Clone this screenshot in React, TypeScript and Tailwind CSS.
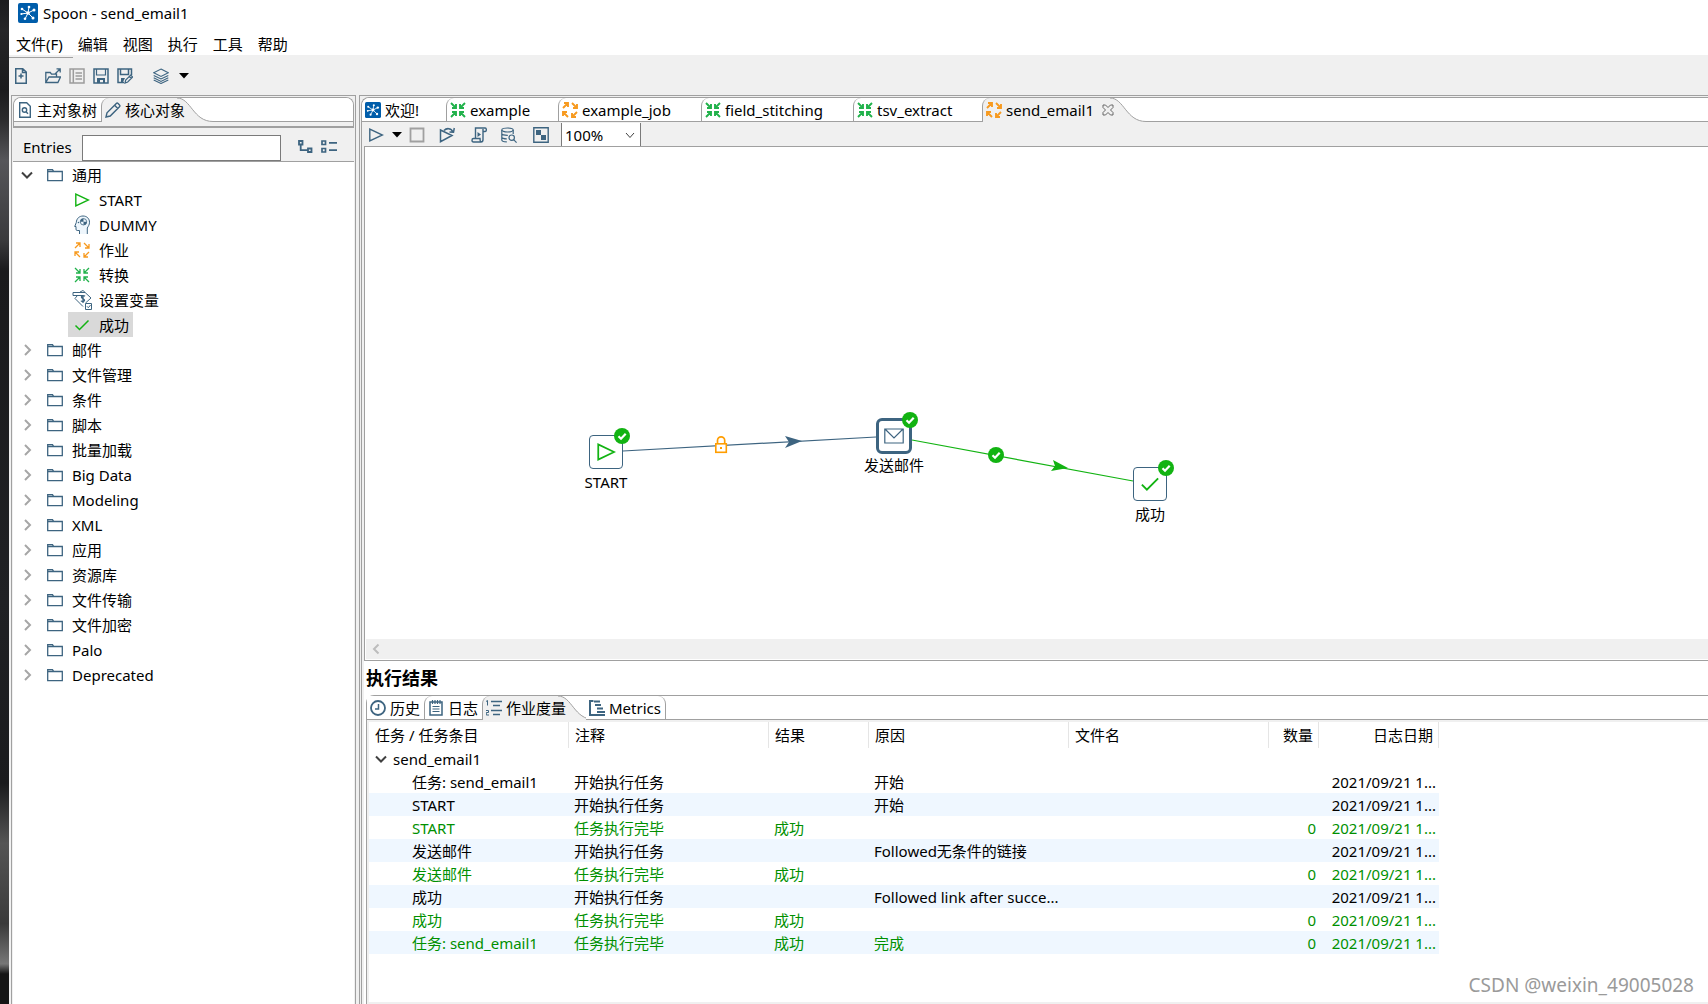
import React, { useState } from "react";

type IconProps = { className?: string };

const BLUE = "#3d6480";
const GREEN = "#12b312";

function Svg({ className = "size-4", children, box = "0 0 16 16", color = BLUE, width = 1.5 }: {
  className?: string; children: React.ReactNode; box?: string; color?: string; width?: number;
}) {
  return (
    <svg className={`shrink-0 ${className}`} viewBox={box} fill="none" stroke={color} strokeWidth={width} aria-hidden="true">
      {children}
    </svg>
  );
}

function SpoonLogo({ className = "size-4" }: IconProps) {
  return (
    <Svg className={className} box="0 0 20 20" color="#fff" width={1}>
      <rect width="20" height="20" rx="2" fill="#005daa" stroke="none" />
      <path d="M10 10L4 6M10 10L3 11M10 10L7 16M10 10L15 15M10 10L16 7M10 10L11 4" />
      <g fill="#fff" stroke="none">
        <circle cx="4" cy="6" r="1.3" /><circle cx="3.4" cy="11" r="1.1" /><circle cx="7" cy="15.8" r="1.3" />
        <circle cx="15" cy="15" r="1.5" /><circle cx="16" cy="7" r="1.5" /><circle cx="11" cy="4" r="1.3" /><circle cx="10" cy="10" r="1.8" />
      </g>
    </Svg>
  );
}
const NewIcon = () => (
  <Svg className="h-4 w-3" box="0 0 12 16"><path d="M.75.75h7L11.25 4v11.25H.75zM7.5.75V4.5h3.7M6 5.5v5M3.5 8h5" /></Svg>
);
const OpenIcon = () => (
  <Svg width={1.3}><path d="M.8 14.5V4.5h4.5l1.2 1.6h5V9M.8 14.5L4 9h11.5l-2.6 5.5zM10 6l5-5M11.5.8h3.7v3.7" /></Svg>
);
const ListIcon = () => (
  <Svg color="#9c9c9c"><path d="M1 1h14v14H1zM4.3 1v14M6.5 5H13M6.5 8H13M6.5 11H13" /></Svg>
);
const SaveIcon = () => (
  <Svg><path d="M1 1h14v14H1z" /><path d="M3.5 1v6h9V1" strokeWidth="1.2" /><path d="M4 10h8v5h-2v-3H7v3H4z" fill={BLUE} stroke="none" /></Svg>
);
const SaveAsIcon = () => (
  <Svg><path d="M7 14.5H1V1h13.5v6M3.5 1v5.5h8V1" /><path d="M4 10h4l-2 4H4z" fill={BLUE} stroke="none" /><path d="M8 15l.7-3 5-5 2 2-5 5zM12.3 8.5l2 2" strokeWidth="1.2" /></Svg>
);
const LayersIcon = () => (
  <Svg width={1.1}><path d="M8 1l7.3 3.7L8 8.4.7 4.7zM.7 7.4L8 11l7.3-3.6M.7 9.8L8 13.4l7.3-3.6M.7 12L8 15.5l7.3-3.5" /></Svg>
);
const Caret = () => (
  <svg className="h-1.5 w-2.5 shrink-0" viewBox="0 0 10 6" aria-hidden="true"><path d="M0 0h10L5 5.5z" fill="#000" /></svg>
);
const PageSearchIcon = () => (
  <Svg className="h-4 w-3" box="0 0 12 16" width={1.4}><path d="M.7.7h7l3.6 3.6v11H.7z" /><circle cx="5.5" cy="8" r="2.2" /><path d="M7 9.7l2 2" /></Svg>
);
const PencilIcon = () => (
  <Svg width={1.4}><path d="M1 15l1-4.2L11.3 1.5c.6-.6 1.2-.6 1.8 0l1.4 1.4c.6.6.6 1.2 0 1.8L5.2 14zM9.6 3.3l3.2 3.2" /></Svg>
);
const TreeIcon = () => (
  <Svg width={1.8}><path d="M2 2h3.500v3.500H2zM11 9.500h3.500V13H11zM3.700 6v5.200H11" /></Svg>
);
const BulletsIcon = () => (
  <Svg width={1.7}><path d="M1 2h3.500v3.500H1zM1 9.500h3.500V13H1zM8 3.800h8M8 11.200h8" /></Svg>
);
const FolderIcon = () => (
  <Svg className="h-3.5 w-4" box="0 0 16 14" width={1.3}><path d="M.7 12.6V1.6h4.8l1.3 1.9h8.5v9.1zM.7 3.5h6" /></Svg>
);
const Triangle = ({ className, color = GREEN }: IconProps & { color?: string }) => (
  <Svg className={className} color={color} width={1.4}><path d="M1.800 2v12L14.500 8z" /></Svg>
);
const HeadIcon = () => (
  <Svg className="h-5 w-4" box="0 0 16 20" width={1}>
    <path d="M5.500 19v-3.500H3.200c-.8 0-1.200-.5-1.200-1.300V11.500H.7L2.300 7.500C2.500 3.500 5.300 1 9 1c4 0 6.500 2.800 6.500 6.200 0 2.600-1.200 4-2.200 5.800v6" fill="#eef6fc" />
    <circle cx="9.500" cy="6.800" r="3.200" strokeWidth=".8" />
    <path d="M9.500 6.800V3.600a3.200 3.200 0 0 0-3.200 3.200zM9.500 6.800V10a3.200 3.200 0 0 0 3.200-3.200z" fill={BLUE} stroke="none" />
    <circle cx="4.500" cy="7.500" r=".8" fill={BLUE} stroke="none" />
  </Svg>
);
const JobIcon = ({ bold = false }: { bold?: boolean }) => (
  <Svg color="#f79a1f" width={bold ? 1.9 : 1.3}><path d="M1 6l5-5M2 1h4v4M10 1l5 5M15 2v4h-4M15 10l-5 5M10 11v4h4M6 15l-5-5M1 14v-4h4" /></Svg>
);
const TransIcon = ({ bold = false }: { bold?: boolean }) => (
  <Svg color="#21b24b" width={bold ? 1.9 : 1.3}><path d="M1 1l5 5M6 2v4H2M15 1l-5 5M10 2v4h4M1 15l5-5M6 14v-4H2M15 15l-5-5M10 14v-4h4" /></Svg>
);
const VarIcon = () => (
  <Svg className="-mr-0.5 -ml-0.5 size-5" box="0 0 20 20" width={1}><path d="M1 2.500h12M1 5.500h10M1 2.500v3M8 2l3-1.500L19 8l-5.500 5M3 8.500l8 8M5 6L3 8.500" /><path d="M13 6.200c-1-1-4-.6-3.500 1S13 9 12.500 10.500 9.500 11.700 9 10.800M11 5v8" strokeWidth="1.300" /><path d="M13.500 13.500h6v6h-6zM15 16.300l1.300 1.400L18.600 15" fill="#fff" /></Svg>
);
const CheckIcon = ({ className }: IconProps) => (
  <Svg className={className} color={GREEN}><path d="M1.500 8.500L5.500 12.500 14.500 3.500" /></Svg>
);
const StopIcon = () => (
  <Svg color="#a0a0a0" width={1.8}><path d="M1.500 1.500h13v13h-13z" /></Svg>
);
const ReplayIcon = () => (
  <Svg><path d="M1.500 3v11.700L13 8.500zM5 3.500C7.500.8 12 .8 14 5M15.300 1L14.500 5.300 10.500 5" /></Svg>
);
const ScriptIcon = () => (
  <Svg width={1.4}><path d="M4.500 11V1h9.700c1.500 0 1.500 3.500 0 3.500H12M12 2v10.500c0 2-1 2.500-2 2.500H2.500c-2 0-2-3.500 0-3.500H9c0 2 0 3.500 1.500 3.500" /><path d="M6.500 5v5l3.500-2.500z" fill={BLUE} stroke="none" /></Svg>
);
const DbSearchIcon = () => (
  <Svg width={1.2}><ellipse cx="6.500" cy="3" rx="5.700" ry="2" /><path d="M.8 3v10c0 1 2 1.800 5 1.900M12.200 3v4M.8 6.500c0 1.200 3 2 6 1.900M.8 10c0 1.200 2.500 2 5 1.900" /><circle cx="10.700" cy="10.700" r="2.700" /><path d="M12.600 12.600l3 3" /></Svg>
);
const GridIcon = () => (
  <Svg width={1.4}><path d="M.8.8h14.400v14.400H.800z" /><path d="M3 3h5v5H3zM8 8h5v5H8z" fill={BLUE} stroke="none" /></Svg>
);
const ClockIcon = () => (
  <Svg width={1.8}><circle cx="8" cy="8" r="7" /><path d="M8.500 4v5H5" strokeWidth="1.500" /></Svg>
);
const LogIcon = () => (
  <Svg className="mx-px h-4 w-3.5" box="0 0 14 16" width={1.500}><path d="M1 2h12v13H1z" /><path d="M3.500 6.500h7M3.500 9h7M3.500 11.500h7" strokeWidth="1.200" /><path d="M3.500 0v4M6 0v4M8.500 0v4M11 0v4" strokeWidth="1.200" /></Svg>
);
const NumberedIcon = () => (
  <Svg width={1.4}><path d="M5 1.500h11M7 5.500h7M5 10.500h11M7 14.500h7" /><path d="M0 1.500L1.500.5v5M0 10.500h2.500v2H.300v2.500H3" strokeWidth="1" /></Svg>
);
const GanttIcon = () => (
  <Svg width={2}><path d="M4.500 1H1v14h15" /><path d="M5 1.500h6M6 5h6M8 8.500h6M8 12h8" /></Svg>
);

function TabCurve() {
  return (
    <svg className="h-full w-9 shrink-0" viewBox="0 0 36 24" preserveAspectRatio="none" aria-hidden="true">
      <path d="M0 0C14 0 16 23.500 36 23.500V24H0z" fill="#f0f0f0" />
      <path d="M0 0C14 0 16 23.500 36 23.500" fill="none" stroke="#a0a0a0" />
    </svg>
  );
}

function Tab({ icon, label, selected, width, onClick, edge = true, end = false, gap = "gap-1", trailing }: {
  icon: React.ReactNode; label: string; selected?: boolean; width: string; onClick?: () => void; edge?: boolean; end?: boolean; gap?: string; trailing?: React.ReactNode;
}) {
  const look = selected ? "bg-[#f0f0f0] rounded-tl-lg border-l" : `bg-white border-b ${edge ? "border-l rounded-tl-lg" : ""} ${end ? "border-r rounded-tr-lg" : ""}`;
  return (
    <button role="tab" aria-selected={!!selected} onClick={onClick} className={`${width} ${look} h-full shrink-0 border-[#a0a0a0]`}>
      <span className={`relative z-10 flex items-center pl-[3px] whitespace-nowrap ${gap}`}>
        {icon}
        <span>{label}</span>
        {trailing}
      </span>
    </button>
  );
}

const Filler = () => <div className="h-full flex-1 border-b border-[#a0a0a0] bg-white" />;

const generalEntries = [
  { label: "START", icon: <Triangle /> },
  { label: "DUMMY", icon: <HeadIcon /> },
  { label: "作业", icon: <JobIcon /> },
  { label: "转换", icon: <TransIcon /> },
  { label: "设置变量", icon: <VarIcon /> },
  { label: "成功", icon: <CheckIcon /> },
];
const folders = ["邮件", "文件管理", "条件", "脚本", "批量加载", "Big Data", "Modeling", "XML", "应用", "资源库", "文件传输", "文件加密", "Palo", "Deprecated"];

function Chevron({ open }: { open?: boolean }) {
  return (
    <Svg className="size-3" box="0 0 12 12" color={open ? "#404040" : "#a6a6a6"} width={2}>
      <path d={open ? "M1 3.500l5 5 5-5" : "M4 1l5 5-5 5"} />
    </Svg>
  );
}

function LeftPanel() {
  const [picked, setPicked] = useState("成功");
  return (
    <aside className="flex w-[345px] shrink-0 flex-col border border-b-0 border-[#a0a0a0] bg-[#f0f0f0] px-px pt-px">
      <div role="tablist" className="flex h-[25px] shrink-0 overflow-hidden rounded-t-lg border border-b-0 border-[#a0a0a0] bg-white">
        <Tab icon={<span className="pl-0.5"><PageSearchIcon /></span>} label="主对象树" width="w-[87px]" gap="gap-1.5" edge={false} />
        <Tab icon={<PencilIcon />} label="核心对象" width="w-[76px]" selected />
        <TabCurve />
        <Filler />
      </div>
      <div className="h-1.5 shrink-0 border-x border-b-2 border-[#a0a0a0]" />
      <div className="flex h-[34px] shrink-0 items-center border-b border-[#a0a0a0] pt-1 pl-2.5">
        <label htmlFor="entries" className="w-[59px]">Entries</label>
        <input id="entries" className="mt-0.5 h-[26px] w-[199px] border border-[#7a7a7a] bg-white px-1 outline-none" />
        <button aria-label="展开" className="ml-4"><TreeIcon /></button>
        <button aria-label="折叠" className="ml-2"><BulletsIcon /></button>
      </div>
      <ul className="flex-1 overflow-hidden bg-white">
        <li>
          <button className="flex h-[25px] items-center pl-2">
            <Chevron open />
            <span className="mr-[9px] ml-3.5"><FolderIcon /></span>通用
          </button>
          <ul className="pl-[55px]">
            {generalEntries.map((e) => (
              <li key={e.label}>
                <button onClick={() => setPicked(e.label)} className={`flex h-[25px] items-center gap-[9px] px-1.5 pr-1 ${picked === e.label ? "bg-[#d9d9d9]" : ""}`}>
                  {e.icon}
                  {e.label}
                </button>
              </li>
            ))}
          </ul>
        </li>
        {folders.map((f) => (
          <li key={f}>
            <button className="flex h-[25px] items-center pl-2">
              <Chevron />
              <span className="mr-[9px] ml-3.5"><FolderIcon /></span>{f}
            </button>
          </li>
        ))}
      </ul>
    </aside>
  );
}

function Badge({ className = "" }: IconProps) {
  return (
    <svg className={`absolute size-4 ${className}`} viewBox="0 0 16 16" aria-hidden="true">
      <circle cx="8" cy="8" r="8" fill={GREEN} />
      <path d="M4.500 8.200l2.500 2.500 4.700-5" fill="none" stroke="#fff" strokeWidth="2.200" />
    </svg>
  );
}

function Node({ place, label, children, bold }: { place: string; label: string; children: React.ReactNode; bold?: boolean }) {
  return (
    <div className={`absolute flex w-20 flex-col items-center ${place}`}>
      <div className={`relative flex items-center justify-center border-[#3d6480] bg-white ${bold ? "size-9 rounded-md border-3" : "size-[34px] rounded border"}`}>
        {children}
        <Badge className={bold ? "-top-[9px] -right-[9px]" : "-top-2 -right-2"} />
      </div>
      <span className={bold ? "" : "mt-0.5"}>{label}</span>
    </div>
  );
}

function Canvas() {
  return (
    <div className="relative flex-1 overflow-hidden bg-white">
      <svg className="absolute inset-0 h-full w-full" aria-hidden="true">
        <path d="M258 304L511 290" stroke={BLUE} strokeWidth="1.200" />
        <path d="M420 289l17 5-17 7 4-6z" fill={BLUE} />
        <path d="M547 293L768 334" stroke={GREEN} strokeWidth="1.200" />
        <path d="M688 313l15 8-17 3 4-5z" fill={GREEN} />
        <rect x="350.800" y="296.800" width="10.500" height="8.500" fill="#fff" stroke="#ff9d00" strokeWidth="1.600" />
        <path d="M352.500 296.500v-3a3.600 3.600 0 0 1 7.200 0v3" fill="none" stroke="#ff9d00" strokeWidth="1.700" />
        <rect x="355" y="300" width="2" height="2" fill="#ff9d00" />
      </svg>
      <Badge className="top-[300px] left-[623px]" />
      <Node place="top-[288px] left-[201px]" label="START"><Triangle className="size-5" /></Node>
      <Node place="top-[271px] left-[489px]" label="发送邮件" bold>
        <Svg className="h-4 w-5" box="0 0 20 16" width={1.200}><path d="M.8 1h18.400v14H.800zM1.500 1.500L10 10l8.500-8.500" /></Svg>
      </Node>
      <Node place="top-[320px] left-[745px]" label="成功"><CheckIcon className="size-5" /></Node>
    </div>
  );
}

const rows = [
  ["任务: send_email1", "开始执行任务", "", "开始", ""],
  ["START", "开始执行任务", "", "开始", ""],
  ["START", "任务执行完毕", "成功", "", "0"],
  ["发送邮件", "开始执行任务", "", "Followed无条件的链接", ""],
  ["发送邮件", "任务执行完毕", "成功", "", "0"],
  ["成功", "开始执行任务", "", "Followed link after succe...", ""],
  ["成功", "任务执行完毕", "成功", "", "0"],
  ["任务: send_email1", "任务执行完毕", "成功", "完成", "0"],
];
const headers = [
  { label: "任务 / 任务条目", look: "w-[200px] text-left" },
  { label: "注释", look: "w-[200px] text-left" },
  { label: "结果", look: "w-[100px] text-left" },
  { label: "原因", look: "w-[200px] text-left" },
  { label: "文件名", look: "w-[200px] text-left" },
  { label: "数量", look: "w-[50px] text-right" },
  { label: "日志日期", look: "w-[120px] text-right" },
];

function Results() {
  return (
    <section className="flex h-[343px] shrink-0 flex-col bg-white pl-0.5">
      <h2 className="flex h-[34px] shrink-0 items-center text-lg font-bold">执行结果</h2>
      <div role="tablist" className="flex h-[25px] shrink-0 rounded-tl-lg border-t border-l border-[#a0a0a0]">
        <Tab icon={<ClockIcon />} label="历史" width="w-[57px]" edge={false} />
        <Tab icon={<LogIcon />} label="日志" width="w-[58px]" />
        <Tab icon={<NumberedIcon />} label="作业度量" width="w-[76px]" selected />
        <TabCurve />
        <div className="-ml-2 h-full">
          <Tab icon={<GanttIcon />} label="Metrics" width="w-[80px]" edge={false} end />
        </div>
        <Filler />
      </div>
      <div className="flex-1 overflow-hidden border-l border-[#a0a0a0]">
        <div className="h-full overflow-hidden border-t-2 border-b-2 border-l-2 border-[#f0f0f0]">
          <table className="w-[1070px] table-fixed border-separate border-spacing-0 whitespace-nowrap">
            <thead>
              <tr className="h-[26px]">
                {headers.map((h) => (
                  <th key={h.label} scope="col" className={`${h.look} border-r border-[#e5e5e5] p-0 pr-[5px] pl-1.5 font-normal`}>{h.label}</th>
                ))}
              </tr>
            </thead>
            <tbody>
              <tr className="h-[22px]">
                <td colSpan={7} className="p-0">
                  <span className="flex items-center gap-1.5 pl-1.5"><Chevron open />send_email1</span>
                </td>
              </tr>
              {rows.map((r, i) => (
                <tr key={i} className={`h-[23px] odd:bg-[#eff7ff] even:bg-white ${r[4] ? "text-[#009000]" : "text-black"}`}>
                  <td className="p-0 pl-[43px]">{r[0]}</td>
                  <td className="p-0 pl-[5px]">{r[1]}</td>
                  <td className="p-0 pl-[5px]">{r[2]}</td>
                  <td className="p-0 pl-[5px]">{r[3]}</td>
                  <td className="p-0" />
                  <td className="p-0 pr-[3px] text-right">{r[4]}</td>
                  <td className="p-0 pr-[3px] text-right">2021/09/21 1...</td>
                </tr>
              ))}
            </tbody>
          </table>
        </div>
      </div>
    </section>
  );
}

function CloseIcon() {
  return (
    <Svg className="ml-1 size-3" box="0 0 12 12" color="#666" width={1}>
      <path d="M1 1h2.500L6 3.500 8.500 1H11v2.500L8.500 6 11 8.500V11H8.500L6 8.500 3.500 11H1V8.500L3.500 6 1 3.500z" />
    </Svg>
  );
}

function Workspace() {
  return (
    <main className="flex min-w-0 flex-1 flex-col border-t border-l border-[#a0a0a0] bg-[#f0f0f0] pt-px pl-px">
      <div className="flex min-h-0 flex-1 flex-col rounded-tl-lg border-t border-l border-[#a0a0a0]">
        <div role="tablist" className="flex h-6 shrink-0 overflow-hidden rounded-tl-lg bg-white">
          <Tab icon={<SpoonLogo />} label="欢迎!" width="w-[84px]" edge={false} />
          <Tab icon={<TransIcon bold />} label="example" width="w-[112px]" />
          <Tab icon={<JobIcon bold />} label="example_job" width="w-[143px]" />
          <Tab icon={<TransIcon bold />} label="field_stitching" width="w-[152px]" />
          <Tab icon={<TransIcon bold />} label="tsv_extract" width="w-[129px]" />
          <Tab icon={<JobIcon bold />} label="send_email1" width="w-[128px]" selected trailing={<CloseIcon />} />
          <TabCurve />
          <Filler />
        </div>
        <div className="flex min-h-0 flex-1 flex-col pl-0.5">
          <div className="flex h-6 shrink-0 items-center pt-px pl-1">
            <button aria-label="运行"><Triangle color={BLUE} /></button>
            <button aria-label="运行选项" className="ml-2"><Caret /></button>
            <button aria-label="停止" className="ml-[7px]"><StopIcon /></button>
            <button aria-label="重放" className="ml-3.5"><ReplayIcon /></button>
            <button aria-label="脚本" className="ml-4"><ScriptIcon /></button>
            <button aria-label="数据库" className="ml-3.5"><DbSearchIcon /></button>
            <button aria-label="网格" className="ml-4"><GridIcon /></button>
            <div className="relative ml-3 h-[23px] w-20 border-x border-[#7a7a7a] bg-white">
              <select aria-label="缩放" className="h-full w-full appearance-none bg-transparent pl-[3px] outline-none">
                <option>100%</option>
              </select>
              <Svg className="pointer-events-none absolute top-1.5 right-1 size-3" box="0 0 12 12" color="#404040" width={1}><path d="M2 4l4 4.500L10 4" /></Svg>
            </div>
          </div>
          <div className="flex min-h-0 flex-1 flex-col border-y border-l border-[#a0a0a0] bg-white">
            <Canvas />
            <div className="mb-px ml-px flex h-5 shrink-0 items-center bg-[#f0f0f0] pl-1">
              <button aria-label="向左滚动"><Svg className="size-3" box="0 0 12 12" color="#bdbdbd" width={2}><path d="M8.500 1.500L4 6l4.500 4.500" /></Svg></button>
            </div>
          </div>
          <Results />
        </div>
      </div>
    </main>
  );
}

export default function App() {
  return (
    <div className="relative flex h-screen overflow-hidden bg-[#f0f0f0] font-['Noto_Sans','Noto_Sans_CJK_SC',sans-serif] text-[15px] leading-[22px] text-black">
      <div className="w-[9px] shrink-0 bg-[linear-gradient(180deg,#1c1c1e_0%,#262628_3%,#1b1b1d_9%,#2c2c2e_12%,#56565a_16%,#3a3a3c_24%,#1a1a1c_27%,#202124_60%,#1a1b1d_78%,#555_84%,#3a3a3a_92%,#777_96%,#151515_97%,#151515_100%)]" />
      <div className="flex min-w-0 flex-1 flex-col">
        <header className="flex h-[27px] shrink-0 items-center gap-[5px] bg-white pb-0.5 pl-[9px]">
          <SpoonLogo className="size-5" />
          <h1>Spoon - send_email1</h1>
        </header>
        <nav className="flex h-7 shrink-0 items-center gap-[15px] bg-white pt-1.5 pl-[7px]">
          {["文件(F)", "编辑", "视图", "执行", "工具", "帮助"].map((m) => <button key={m}>{m}</button>)}
        </nav>
        <div className="h-[3px] w-16 shrink-0 border-b border-[#a0a0a0]" />
        <div className="flex h-[37px] shrink-0 items-center pb-0.5 pl-1.5">
          <button aria-label="新建"><NewIcon /></button>
          <button aria-label="打开" className="ml-[18px]"><OpenIcon /></button>
          <button aria-label="浏览" className="ml-2"><ListIcon /></button>
          <button aria-label="保存" className="ml-2"><SaveIcon /></button>
          <button aria-label="另存为" className="ml-2"><SaveAsIcon /></button>
          <button aria-label="视角" className="ml-5"><LayersIcon /></button>
          <button aria-label="视角选项" className="ml-2.5"><Caret /></button>
        </div>
        <div className="flex min-h-0 flex-1 gap-[3px] pl-0.5">
          <LeftPanel />
          <Workspace />
        </div>
      </div>
      <div className="absolute right-3.5 bottom-2 text-[19px] text-[#9a9a9a]">CSDN @weixin_49005028</div>
    </div>
  );
}
